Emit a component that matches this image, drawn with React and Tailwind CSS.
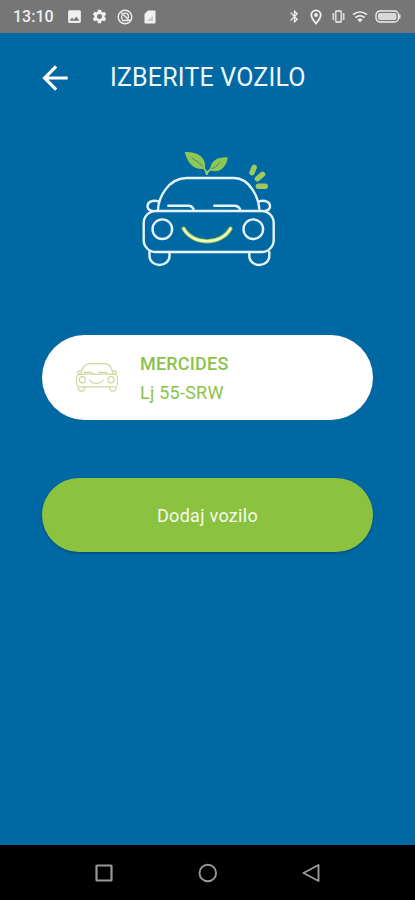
import { MdArrowBack, MdBluetooth, MdImage, MdSettings } from 'react-icons/md';

const vehicles = [{ id: 1, name: 'MERCIDES', plate: 'Lj 55-SRW' }];

function CarBody() {
  return (
    <>
      <path d="M18 61C18 48 28 28 47 28H94C110 28 119 48 119.5 61" />
      <rect x="3.7" y="61" width="130" height="41" rx="12" />
      <path d="M18.5 51.3C12 49.5 7.5 52.5 7.5 56.2c0 2.5 2 4.2 5 4.8M119 51.3c6.5-1.8 11 1.2 11 4.9 0 2.5-2 4.2-5 4.8" />
      <circle cx="22.3" cy="79.2" r="9.8" />
      <circle cx="113.3" cy="79.2" r="9.8" />
      <path d="M9.5 102v4a10 9 0 0 0 20 0V102M109.3 102v4a10 9 0 0 0 20 0V102" />
      <path d="M28.3 55.7H49q4 .5 5 5M74.3 55.7H95q4.5 .5 5.5 5" />
    </>
  );
}

function CarLogo() {
  return (
    <svg className="h-[118px] w-[138px]" viewBox="0 0 138 118" fill="none" strokeLinecap="round">
      <g stroke="#e6f5fb" strokeWidth="2.4">
        <CarBody />
      </g>
      {/* smile */}
      <path d="M43.6 78.6C53 95.5 81 95.5 90.5 78.6" stroke="#8dc63f" strokeWidth="4.2" />
      <path d="M43.6 78.6C53 95.5 81 95.5 90.5 78.6" stroke="#f1f9c0" strokeWidth="2.4" />
      {/* sprout */}
      <path d="M44.7 2C56 1.500 66.500 6 65 18.8 53.500 20.500 47.500 13 44.7 2Z" fill="#8fc754" />
      <path d="M87.8 7.3C86.500 17.500 79 24 70 20.200 70.500 9.500 79 6.500 87.8 7.3Z" fill="#8fc754" />
      <path d="M52 8q8 4 13 11M70 20q5-2 10-7.5" stroke="#2c7f88" strokeWidth="0.8" />
      <path d="M63.5 17.5q2.8 3 3.3 7.5.5-4 4.500-6" stroke="#9ccc65" strokeWidth="1.8" />
      {/* sparkle */}
      <path d="M114.200 17.300l-2.200 5.500M122.600 24.300l-5.200 4.500M118.300 36.200h7" stroke="#9fc95f" strokeWidth="5.4" />
    </svg>
  );
}

function StatusBar() {
  return (
    <header className="flex h-[33px] items-center justify-between bg-[#767676] pr-[14px] pl-[13px] text-[#f0f0f0]">
      <div className="flex items-center">
        <span className="w-[53px] text-[16px] font-medium">13:10</span>
        <MdImage className="size-[17px]" />
        <MdSettings className="ml-2 size-[17px]" />
        <svg className="ml-[9px] size-4" viewBox="0 0 16 16" fill="none" stroke="currentColor" strokeWidth="1.4">
          <circle cx="8" cy="8" r="6.8" />
          <path d="M4 3.5l9 8.5M5.2 10.5a4 4 0 0 1 0-4.5M6.5 4.5q5-1.5 5 3.5v1M5 11.5h6" />
        </svg>
        <svg className="ml-[9px] size-4" viewBox="0 0 16 16">
          <path d="M6 1.5h6.5q1 0 1 1v11q0 1-1 1h-9q-1 0-1-1V5Z" fill="currentColor" />
          <path d="M5 12h6V7Z" fill="#c8c8c8" />
        </svg>
      </div>
      <div className="flex items-center">
        <MdBluetooth className="size-[15px]" />
        <svg className="ml-[7px] h-4 w-[14px]" viewBox="0 0 14 16" fill="none" stroke="currentColor" strokeWidth="1.8">
          <path d="M7 14.5C4 11 2.3 8.5 2.3 6a4.700 4.700 0 0 1 9.400 0C11.700 8.5 10 11 7 14.5Z" />
          <circle cx="7" cy="6" r="1" fill="currentColor" />
        </svg>
        <svg className="ml-[8px] size-[15px]" viewBox="0 0 15 15" fill="none" stroke="#d6d6d6">
          <rect x="4.7" y="2" width="5.6" height="11" rx="1" strokeWidth="1.8" />
          <path d="M2.3 4v7M12.7 4v7" strokeWidth="1.7" />
        </svg>
        <svg className="ml-[6px] size-4" viewBox="0 0 16 16" fill="none" stroke="currentColor" strokeWidth="1.7">
          <path d="M1 5.6q7-5.2 14 0M3.4 8.5q4.6-3.5 9.200 0" />
          <path d="M5.3 10.3q2.7-1.7 5.4 0L8 13.5Z" fill="currentColor" stroke="none" />
        </svg>
        <svg className="ml-[7px] h-[13px] w-[26px]" viewBox="0 0 26 13" fill="none">
          <rect x="1" y="1" width="22.5" height="11" rx="4" stroke="currentColor" strokeWidth="1.3" />
          <rect x="3" y="3" width="18.5" height="7" rx="2" fill="#d8d8d8" />
          <path d="M24.8 4.5v4" stroke="currentColor" strokeWidth="1.3" />
        </svg>
      </div>
    </header>
  );
}

function NavBar() {
  return (
    <nav className="flex h-[55px] items-center justify-between bg-black px-[94px] text-[#999999]">
      <svg className="size-5" viewBox="0 0 20 20" fill="none" stroke="currentColor" strokeWidth="2.2">
        <rect x="2.5" y="2.5" width="15" height="15" rx="0.5" />
      </svg>
      <svg className="size-5" viewBox="0 0 20 20" fill="none" stroke="currentColor" strokeWidth="1.9">
        <circle cx="9.8" cy="10" r="8.3" />
      </svg>
      <svg className="size-5" viewBox="0 0 20 20" fill="none" stroke="currentColor" strokeWidth="1.9" strokeLinejoin="round">
        <path d="M17.500 2v16L2.500 10Z" />
      </svg>
    </nav>
  );
}

export default function App() {
  return (
    <div className="flex h-[900px] w-[415px] flex-col overflow-hidden bg-[#0069a4] font-[Roboto,sans-serif]">
      <StatusBar />
      <main className="flex flex-1 flex-col px-[42px]">
        <div className="flex h-[90px] items-center text-[#eef8fc]">
          <button className="-ml-[6px] w-[74px]" aria-label="Nazaj">
            <MdArrowBack className="size-[38px] text-white" />
          </button>
          <h1 className="text-[25px] leading-8 tracking-[0.17px] whitespace-nowrap">IZBERITE VOZILO</h1>
        </div>

        <div className="mt-[27px] ml-[98px]">
          <CarLogo />
        </div>

        {vehicles.map((vehicle) => (
          <button key={vehicle.id} className="mt-[67px] flex h-[85px] items-center rounded-full bg-white pl-[34px] text-left text-[#8bc34a]">
            <svg className="h-[29px] w-[42px]" viewBox="2 26.5 133.5 91" fill="none" stroke="#cbd9a0" strokeWidth="3.8" strokeLinecap="round">
              <CarBody />
              <path d="M45 80C54 94 80 94 89 80" />
            </svg>
            <span className="ml-[22px] flex flex-col text-[18px] leading-[29px]">
              <span className="font-medium tracking-[0.2px]">{vehicle.name}</span>
              <span className="tracking-[0.25px]">{vehicle.plate}</span>
            </span>
          </button>
        ))}

        <button className="mt-[58px] h-[74px] rounded-full bg-[#8bc340] text-[18px] tracking-[0.3px] text-[#f5faeb] shadow-[0_1px_3px_rgba(0,0,0,0.3)]">
          Dodaj vozilo
        </button>
      </main>
      <NavBar />
    </div>
  );
}
